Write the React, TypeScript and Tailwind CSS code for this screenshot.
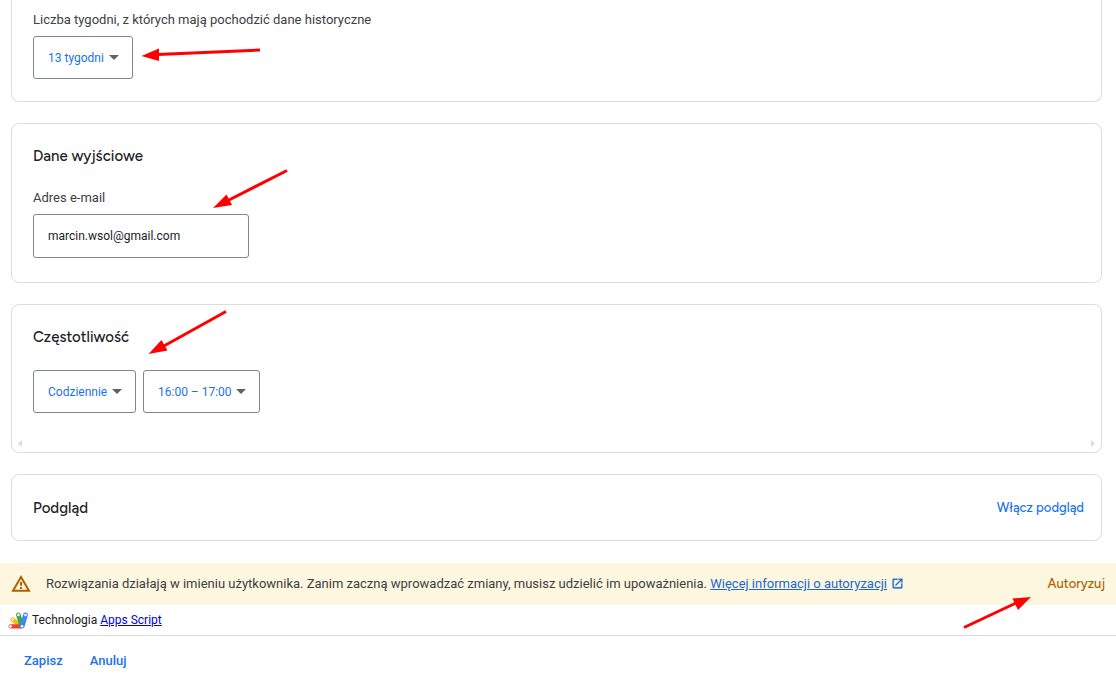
import React from "react";

function Card({ children, className = "" }: { children: React.ReactNode; className?: string }) {
  return (
    <section className={`rounded-lg border border-[#dadce0] bg-white px-[21px] ${className}`}>
      {children}
    </section>
  );
}

function Heading({ children }: { children: React.ReactNode }) {
  return <h2 className="font-['Figtree','Inter',sans-serif] text-[15px] leading-5 font-medium text-[#202124]">{children}</h2>;
}

function Dropdown({ id, label, value, className }: { id: string; label?: string; value: string; className: string }) {
  return (
    <div className={`relative ${className}`}>
      <select
        id={id}
        aria-label={label}
        defaultValue={value}
        className="block h-[43px] w-full appearance-none rounded-[3px] border border-[#80868b] bg-white pl-[14px] pr-6 text-xs text-[#1a73e8]"
      >
        <option value={value}>{value}</option>
      </select>
      <svg viewBox="0 0 10 5" className="pointer-events-none absolute right-[14px] top-[19px] h-[5px] w-[10px]" aria-hidden="true">
        <path d="M0 0h10L5 5z" fill="#5f6368" />
      </svg>
    </div>
  );
}

type ArrowProps = { className: string; box: string; line: string; head: string };

function Arrow({ className, box, line, head }: ArrowProps) {
  return (
    <svg viewBox={box} className={`pointer-events-none absolute ${className}`} aria-hidden="true">
      <path d={line} stroke="#ff0000" strokeWidth="3" fill="none" />
      <path d={head} fill="#ff0000" />
    </svg>
  );
}

function WarningIcon() {
  return (
    <svg viewBox="0 0 24 24" className="size-5 shrink-0" aria-hidden="true">
      <path d="M12 3.500 21.600 20H2.400z" fill="none" stroke="#b06000" strokeWidth="2.400" />
      <path d="M10.800 9.500h2.400v4.500h-2.400zM10.800 15.500h2.400v2.400h-2.400z" fill="#b06000" />
    </svg>
  );
}

function AppsScriptLogo() {
  return (
    <svg viewBox="0 0 20 17" className="h-[17px] w-5 shrink-0" strokeLinecap="round" fill="none" aria-hidden="true">
      <path d="M4.800 7.600 13 14.200" stroke="#fbbc04" strokeWidth="4.400" />
      <path d="M2.600 14.400H13" stroke="#ea4335" strokeWidth="4.200" />
      <path d="M10.400 2.800 13.400 13" stroke="#34a853" strokeWidth="4.600" />
      <path d="M17.500 2.900 14.200 14" stroke="#4285f4" strokeWidth="4.800" />
      <g fill="#fff">
        <circle cx="2.500" cy="14.400" r="1.300" />
        <circle cx="4.800" cy="7.600" r="1.100" />
        <circle cx="10.400" cy="2.900" r="1.300" />
        <circle cx="17.500" cy="3" r="1.300" />
        <circle cx="14.100" cy="14.300" r="1.300" />
      </g>
    </svg>
  );
}

function OpenInNewIcon() {
  return (
    <svg viewBox="0 0 24 24" className="mb-[2px] size-[13px]" fill="#1967d2" stroke="#1967d2" strokeWidth="0.6" aria-hidden="true">
      <path d="M19 19H5V5h7V3H5a2 2 0 0 0-2 2v14a2 2 0 0 0 2 2h14c1.1 0 2-.9 2-2v-7h-2v7zM14 3v2h3.59l-9.83 9.83 1.41 1.41L19 6.41V10h2V3h-7z" />
    </svg>
  );
}

export default function App() {
  return (
    <div className="relative overflow-hidden bg-white font-['Roboto',sans-serif] text-[13px] leading-5 text-[#3c4043]">
      <main className="flex flex-col gap-[21px] pl-[11px] pr-[14px]">
        <Card className="rounded-t-none border-t-0 pt-[10px] pb-[22px]">
          <label htmlFor="weeks" className="mb-[6px] block">
            Liczba tygodni, z których mają pochodzić dane historyczne
          </label>
          <Dropdown id="weeks" value="13 tygodni" className="w-[100px]" />
        </Card>

        <Card className="pt-[22px] pb-[24px]">
          <Heading>Dane wyjściowe</Heading>
          <label htmlFor="email" className="mt-[22px] mb-[6px] block">
            Adres e-mail
          </label>
          <input
            id="email"
            type="email"
            defaultValue="marcin.wsol@gmail.com"
            className="block h-11 w-[216px] rounded-[3px] border border-[#80868b] px-[14px] text-xs text-[#202124]"
          />
        </Card>

        <Card className="pt-[22px] pb-1">
          <Heading>Częstotliwość</Heading>
          <div className="mt-[23px] flex gap-[7px]">
            <Dropdown id="frequency" label="Częstotliwość" value="Codziennie" className="w-[103px]" />
            <Dropdown id="hours" label="Godziny" value="16:00 – 17:00" className="w-[117px]" />
          </div>
          <div className="-mx-[15px] mt-[26px] flex h-[9px] items-center justify-between" aria-hidden="true">
            <svg viewBox="0 0 4 7" className="h-[7px] w-1" fill="#dadce0">
              <path d="M4 0v7L0 3.500z" />
            </svg>
            <svg viewBox="0 0 4 7" className="h-[7px] w-1" fill="#dadce0">
              <path d="M0 0v7l4-3.500z" />
            </svg>
          </div>
        </Card>

        <Card className="flex items-center justify-between pt-[23px] pb-[22px] pr-[17px]">
          <Heading>Podgląd</Heading>
          <button type="button" className="font-['Figtree','Inter',sans-serif] text-[13px] leading-5 font-medium text-[#1a73e8]">
            Włącz podgląd
          </button>
        </Card>
      </main>

      <div className="mt-[22px] flex items-center bg-[#fef7e0] px-[11px] py-[11px]">
        <WarningIcon />
        <p className="ml-[15px] flex grow items-center gap-1">
          <span>
            Rozwiązania działają w imieniu użytkownika. Zanim zaczną wprowadzać zmiany, musisz udzielić im upoważnienia.{" "}
            <a href="#autoryzacja" className="text-[#1967d2] underline">
              Więcej informacji o autoryzacji
            </a>
          </span>
          <OpenInNewIcon />
        </p>
        <button type="button" className="font-['Figtree','Inter',sans-serif] text-[13px] leading-5 font-medium text-[#b06000]">
          Autoryzuj
        </button>
      </div>

      <div className="flex items-center gap-1 border-b border-[#dadce0] py-[5px] pl-2 text-xs leading-5 text-[#202124]">
        <AppsScriptLogo />
        <p>
          Technologia{" "}
          <a href="#apps-script" className="text-[#0000ee] underline">
            Apps Script
          </a>
        </p>
      </div>

      <footer className="flex gap-[27px] px-6 pt-[15px] pb-[14px] font-medium text-[#1a73e8]">
        <button type="button">Zapisz</button>
        <button type="button">Anuluj</button>
      </footer>

      <Arrow className="left-[140px] top-[46px] h-4 w-[121px]" box="140 46 121 16" line="M158 54.500 260 50" head="M141.500 56 159 48.500V61z" />
      <Arrow className="left-[212px] top-[168px] h-[42px] w-[77px]" box="212 168 77 42" line="M228 200.500 287 170.500" head="M213 208 226.500 194.500 232 205z" />
      <Arrow className="left-[147px] top-[309px] h-[47px] w-[80px]" box="147 309 80 47" line="M163 346.500 226 311.500" head="M148.500 354 161.500 340 167.500 350.500z" />
      <Arrow className="left-[962px] top-[595px] h-[35px] w-[71px]" box="962 595 71 35" line="M964 627.500 1016 603" head="M1031 597 1012.500 598.500 1018 610z" />
    </div>
  );
}
